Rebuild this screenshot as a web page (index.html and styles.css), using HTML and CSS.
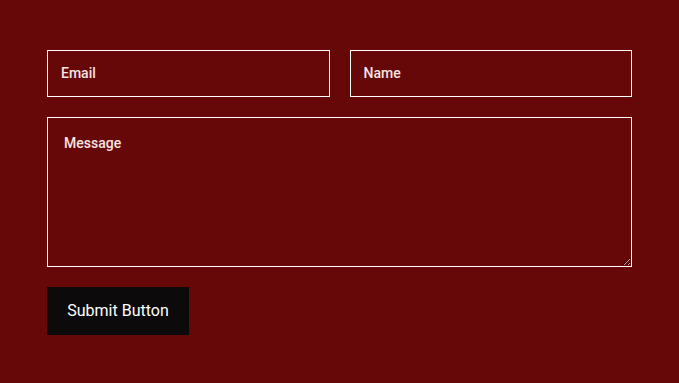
FILE: index.html
```html
<!DOCTYPE html>
<html>
<head>
	<meta charset="UTF-8">
	<title>Contact</title>
	<link rel="stylesheet" href="styles.css">
</head>
<body>
	<form class="form">
		<div class="row">
			<input type="email" class="field" placeholder="Email">
			<input type="text" class="field" placeholder="Name">
		</div>
		<textarea class="field msg" placeholder="Message"></textarea>
		<div><button type="button" class="btn">Submit Button</button></div>
	</form>
</body>
</html>
```

FILE: styles.css
```css
html,body{margin:0;padding:0;background:#660808;}
body{font-family:Roboto,"Liberation Sans",sans-serif;}
.form{padding:50px 47px;display:flex;flex-direction:column;gap:20px;}
.row{display:flex;gap:20px;}
.field{flex:1;min-width:0;height:47px;box-sizing:border-box;background:transparent;border:1px solid #fff;outline:none;color:#fff;font-family:inherit;font-size:14px;font-weight:500;padding:0 13px 2px;margin:0;}
.field::placeholder{color:#f7e3e3;opacity:1;}
.msg{flex:none;display:block;width:100%;height:150px;padding:17px 16px;resize:vertical;}
.btn{width:142px;height:48px;background:#0c0a0a;color:#fff;border:none;font-family:inherit;font-size:16px;padding:0 0 2px;cursor:pointer;}
```
